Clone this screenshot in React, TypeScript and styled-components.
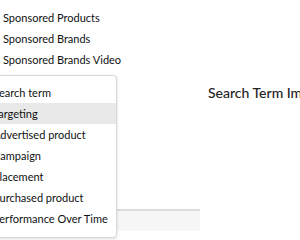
import styled, { createGlobalStyle } from "styled-components";

const GlobalStyle = createGlobalStyle`
  html, body {
    margin: 0;
    padding: 0;
    background: #ffffff;
  }
`;

const REPORT_TYPES = [
  "Search term",
  "Targeting",
  "Advertised product",
  "Campaign",
  "Placement",
  "Purchased product",
  "Performance Over Time",
];

const AD_PRODUCTS = ["Sponsored Products", "Sponsored Brands", "Sponsored Brands Video"];

const App = () => {
  const selected = "Targeting";

  return (
    <>
      <GlobalStyle />
      <Page>
        <RadioGroup>
          {AD_PRODUCTS.map((name) => (
            <RadioRow key={name}>
              <RadioDot />
              <RadioLabel>{name}</RadioLabel>
            </RadioRow>
          ))}
        </RadioGroup>

        <ReportSection>
          <ReportTitle>Search Term Impression Share</ReportTitle>
          <TableHeader />
        </ReportSection>

        <Menu>
          {REPORT_TYPES.map((item) => (
            <MenuItem key={item} $active={item === selected}>
              {item}
            </MenuItem>
          ))}
        </Menu>
      </Page>
    </>
  );
};

export default App;

const Page = styled.div`
  position: relative;
  width: 300px;
  height: 240px;
  overflow: hidden;
  font-family: Lato, "Noto Sans", sans-serif;
  color: #0f1111;
`;

const RadioGroup = styled.div`
  display: flex;
  flex-direction: column;
  padding-top: 7px;
`;

const RadioRow = styled.div`
  display: flex;
  align-items: center;
  height: 21px;
  gap: 4px;
  margin-left: -12px;
`;

const RadioDot = styled.span`
  width: 11px;
  height: 11px;
  box-sizing: border-box;
  border: 1px solid #8d9096;
  border-radius: 50%;
`;

const RadioLabel = styled.span`
  font-size: 11px;
  line-height: 21px;
`;

const ReportSection = styled.div`
  display: flex;
  flex-direction: column;
  padding-top: 13px;
`;

const ReportTitle = styled.div`
  margin-left: 208px;
  font-size: 14px;
  font-weight: 500;
  line-height: 20px;
  color: #232323;
  white-space: nowrap;
`;

const TableHeader = styled.div`
  margin-top: 106px;
  width: 200px;
  height: 20px;
  background: #f6f6f6;
  border-top: 2px solid #dcdcdc;
`;

const Menu = styled.div`
  position: absolute;
  left: -12px;
  top: 75px;
  width: 129px;
  box-sizing: border-box;
  padding: 6px 0 8px;
  background: #ffffff;
  border: 1px solid #d5d9d9;
  border-radius: 4px;
  box-shadow: 0 1px 3px rgba(15, 17, 17, 0.15);
`;

const MenuItem = styled.div<{ $active?: boolean }>`
  height: 21px;
  line-height: 21px;
  padding-left: 4px;
  font-size: 11px;
  white-space: nowrap;
  background: ${({ $active }) => ($active ? "#e9e9e9" : "transparent")};
`;
